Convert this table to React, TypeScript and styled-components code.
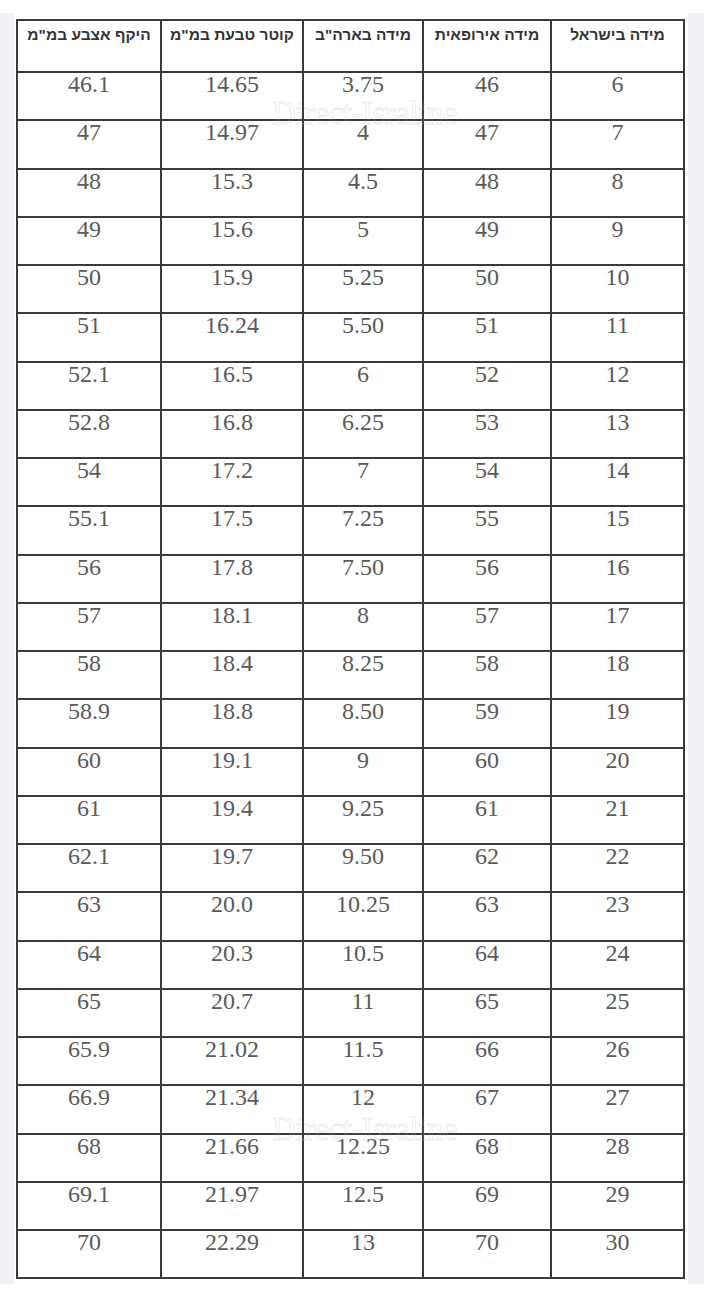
import styled, { createGlobalStyle } from "styled-components";

const GlobalStyle = createGlobalStyle`
  html, body {
    margin: 0;
    padding: 0;
    background: #ffffff;
  }
`;

const Page = styled.div`
  display: flex;
  padding: 13px 0 8px;
  background: #ffffff;
`;

const Rail = styled.div<{ $w: number }>`
  width: ${(p) => p.$w}px;
  flex: none;
  background: #f0f1f4;
`;

const Middle = styled.div`
  flex: 1;
  padding: 6px 5px 5px 2px;
  background: #ffffff;
`;

const TableWrap = styled.div`
  position: relative;
  width: 667px;
`;

const Table = styled.table`
  width: 667px;
  border-collapse: collapse;
  table-layout: fixed;
  direction: rtl;
`;

const HeadCell = styled.th`
  height: 46px;
  padding: 4px 2px 0;
  border: 2px solid #3a3a3a;
  vertical-align: top;
  text-align: center;
  font-family: "Liberation Sans", Arial, sans-serif;
  font-weight: 700;
  font-size: 15.5px;
  line-height: 20px;
  color: #333;
  white-space: nowrap;
`;

const Cell = styled.td`
  height: 46.25px;
  padding: 0 4px;
  border: 2px solid #3a3a3a;
  vertical-align: top;
  text-align: center;
  font-family: "Liberation Serif", "Times New Roman", serif;
  font-size: 24px;
  line-height: 23px;
  color: #5a5a5a;
`;

const Watermark = styled.div<{ $top: number }>`
  position: absolute;
  left: 256px;
  top: ${(p) => p.$top}px;
  font-family: "Liberation Serif", "Times New Roman", serif;
  font-size: 33px;
  line-height: 28px;
  letter-spacing: -0.5px;
  color: transparent;
  -webkit-text-stroke: 1px rgba(190, 190, 190, 0.3);
  pointer-events: none;
  white-space: nowrap;
`;

const widths = [133, 128, 120, 142, 144];

const headers = [
  "מידה בישראל",
  "מידה אירופאית",
  'מידה בארה"ב',
  'קוטר טבעת במ"מ',
  'היקף אצבע במ"מ',
];

const rows: string[][] = [
  ["6", "46", "3.75", "14.65", "46.1"],
  ["7", "47", "4", "14.97", "47"],
  ["8", "48", "4.5", "15.3", "48"],
  ["9", "49", "5", "15.6", "49"],
  ["10", "50", "5.25", "15.9", "50"],
  ["11", "51", "5.50", "16.24", "51"],
  ["12", "52", "6", "16.5", "52.1"],
  ["13", "53", "6.25", "16.8", "52.8"],
  ["14", "54", "7", "17.2", "54"],
  ["15", "55", "7.25", "17.5", "55.1"],
  ["16", "56", "7.50", "17.8", "56"],
  ["17", "57", "8", "18.1", "57"],
  ["18", "58", "8.25", "18.4", "58"],
  ["19", "59", "8.50", "18.8", "58.9"],
  ["20", "60", "9", "19.1", "60"],
  ["21", "61", "9.25", "19.4", "61"],
  ["22", "62", "9.50", "19.7", "62.1"],
  ["23", "63", "10.25", "20.0", "63"],
  ["24", "64", "10.5", "20.3", "64"],
  ["25", "65", "11", "20.7", "65"],
  ["26", "66", "11.5", "21.02", "65.9"],
  ["27", "67", "12", "21.34", "66.9"],
  ["28", "68", "12.25", "21.66", "68"],
  ["29", "69", "12.5", "21.97", "69.1"],
  ["30", "70", "13", "22.29", "70"],
];

export default function App() {
  return (
    <>
      <GlobalStyle />
      <Page>
        <Rail $w={14} />
        <Middle>
          <TableWrap>
            <Table>
              <colgroup>
                {widths.map((w, i) => (
                  <col key={i} style={{ width: w }} />
                ))}
              </colgroup>
              <thead>
                <tr>
                  {headers.map((h) => (
                    <HeadCell key={h}>{h}</HeadCell>
                  ))}
                </tr>
              </thead>
              <tbody>
                {rows.map((r) => (
                  <tr key={r[0]}>
                    {r.map((v, i) => (
                      <Cell key={i}>{v}</Cell>
                    ))}
                  </tr>
                ))}
              </tbody>
            </Table>
            <Watermark $top={80}>Direct-Israline</Watermark>
            <Watermark $top={1096}>Direct-Israline</Watermark>
          </TableWrap>
        </Middle>
        <Rail $w={16} />
      </Page>
    </>
  );
}
